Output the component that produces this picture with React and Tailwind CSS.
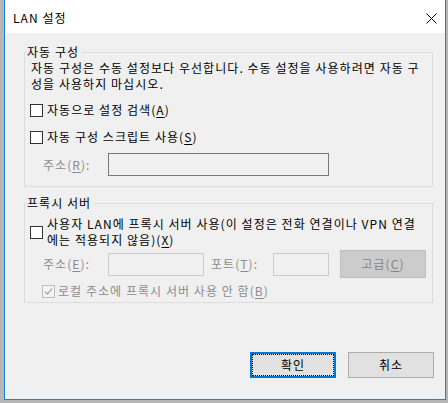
import React from "react";

function Mn({ children }) {
  return <u className="underline underline-offset-[2px] decoration-[1px]">{children}</u>;
}

function CheckBox({ disabled = false, checked = false }) {
  return (
    <span
      className={
        disabled
          ? "w-[13px] h-[13px] shrink-0 border border-[#bcbcbc] bg-[#f4f4f4] flex items-center justify-center"
          : "w-[13px] h-[13px] shrink-0 border border-[#333333] bg-white flex items-center justify-center"
      }
    >
      {checked && (
        <svg width="9" height="9" viewBox="0 0 9 9">
          <path d="M1 4.6 L3.4 7 L8 1.6" stroke="#a6a6a6" strokeWidth="1.3" fill="none" />
        </svg>
      )}
    </span>
  );
}

export default function App() {
  return (
    <div className="w-[448px] h-[403px] bg-[#b6b6b6] pl-[4px] font-['Noto_Sans_CJK_KR',sans-serif] text-[12px] leading-[16px] tracking-[1.05px] text-black">
      <div className="w-[442px] h-[400px] border-x border-b border-[#1883d7] bg-[#f0f0f0] flex flex-col">
        {/* title bar */}
        <div className="h-[33px] shrink-0 bg-white flex items-center justify-between pl-[8px] pr-[8px] pt-[3px]">
          <span>LAN 설정</span>
          <svg width="11" height="11" viewBox="0 0 11 11">
            <path d="M0.5 0.5 L10.5 10.5 M10.5 0.5 L0.5 10.5" stroke="#000" strokeWidth="1" fill="none" />
          </svg>
        </div>

        <div className="pt-[11px] pl-[19px] pr-[12px] flex flex-col">
          {/* automatic configuration */}
          <fieldset className="border border-[#dcdcdc] pb-[10px]">
            <legend className="ml-[2px] pr-[2px]">자동 구성</legend>
            <div className="pl-[5px] flex flex-col">
              <p className="pl-[1px]">
                자동 구성은 수동 설정보다 우선합니다. 수동 설정을 사용하려면 자동 구
                <br />
                성을 사용하지 마십시오.
              </p>
              <label className="mt-[10px] flex items-center gap-[4px]">
                <CheckBox />
                <span>
                  자동으로 설정 검색(<Mn>A</Mn>)
                </span>
              </label>
              <label className="mt-[11px] flex items-center gap-[4px]">
                <CheckBox />
                <span>
                  자동 구성 스크립트 사용(<Mn>S</Mn>)
                </span>
              </label>
              <div className="mt-[8px] pl-[13px] flex items-center">
                <span className="w-[65px] text-[#8c8c8c]">
                  주소(<Mn>R</Mn>):
                </span>
                <div className="w-[221px] h-[23px] border border-[#7a7a7a] bg-[#f0f0f0]" />
              </div>
            </div>
          </fieldset>

          {/* proxy server */}
          <fieldset className="mt-[8px] border border-[#dcdcdc] pb-[3px]">
            <legend className="ml-[2px] pr-[2px]">프록시 서버</legend>
            <div className="pl-[5px] flex flex-col">
              <label className="mt-[5px] flex items-center gap-[4px]">
                <CheckBox />
                <span>
                  사용자 LAN에 프록시 서버 사용(이 설정은 전화 연결이나 VPN 연결
                  <br />
                  에는 적용되지 않음)(<Mn>X</Mn>)
                </span>
              </label>
              <div className="mt-[2px] pl-[13px] flex items-center">
                <span className="w-[65px] text-[#8c8c8c]">
                  주소(<Mn>E</Mn>):
                </span>
                <div className="w-[96px] h-[23px] border border-[#cccccc] bg-[#f0f0f0]" />
                <span className="ml-[7px] w-[62px] text-[#8c8c8c]">
                  포트(<Mn>T</Mn>):
                </span>
                <div className="w-[56px] h-[23px] border border-[#cccccc] bg-[#f0f0f0]" />
                <div className="ml-[11px] w-[86px] h-[28px] border border-[#bfbfbf] bg-[#cccccc] text-[#838383] flex items-center justify-center">
                  <span>
                    고급(<Mn>C</Mn>)
                  </span>
                </div>
              </div>
              <label className="mt-[5px] ml-[12px] flex items-center gap-[3px] text-[#8c8c8c]">
                <CheckBox disabled checked />
                <span>
                  로컬 주소에 프록시 서버 사용 안 함(<Mn>B</Mn>)
                </span>
              </label>
            </div>
          </fieldset>
        </div>

        {/* dialog buttons */}
        <div className="mt-[49px] pr-[11px] flex justify-end gap-[12px]">
          <button className="w-[86px] h-[26px] border-2 border-[#0078d7] bg-[#e1e1e1] p-0">
            <div className="w-full h-full border border-dotted border-black flex items-center justify-center">
              확인
            </div>
          </button>
          <button className="w-[86px] h-[26px] border border-[#adadad] bg-[#e1e1e1] flex items-center justify-center">
            취소
          </button>
        </div>
      </div>
    </div>
  );
}
